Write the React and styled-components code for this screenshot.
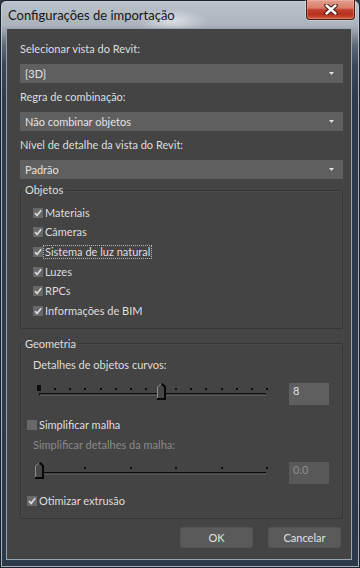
import styled, { createGlobalStyle } from 'styled-components';

const GlobalStyle = createGlobalStyle`
  html, body {
    margin: 0;
    padding: 0;
    background: #2c3948;
  }
  * {
    box-sizing: border-box;
  }
`;

const Window = styled.div`
  width: 360px;
  height: 568px;
  display: flex;
  flex-direction: column;
  padding: 0 7px 7px 5px;
  border: 1px solid #19212b;
  border-radius: 6px 6px 0 0;
  box-shadow: inset 0 0 0 1px rgba(196, 206, 216, 0.8);
  background:
    radial-gradient(ellipse 36px 12px at 172px 20px, rgba(255, 255, 255, 0.55), rgba(255, 255, 255, 0)),
    linear-gradient(180deg, #bac2ca 0, #abb4bd 24px, #98a2ac 30px, #5e6b7a 44px, #3a4756 64px, #2e3b4a 100px, #2c3948 100%);
  font-family: Lato, "Liberation Sans", sans-serif;
  font-size: 11px;
  color: #dedede;
`;

const TitleBar = styled.div`
  height: 27px;
  display: flex;
  justify-content: space-between;
  align-items: flex-start;
  margin-right: -3px;
`;

const Title = styled.div`
  padding: 6px 0 0 2px;
  font-size: 13px;
  line-height: 16px;
  color: #161616;
`;

const CloseButton = styled.div`
  width: 49px;
  height: 20px;
  margin-top: -1px;
  display: flex;
  align-items: center;
  justify-content: center;
  border: 1px solid #4a1a14;
  border-top: none;
  border-radius: 0 0 4px 4px;
  background: linear-gradient(180deg, #e2a091 0%, #d77c68 42%, #bf3f2b 52%, #b6311f 76%, #d45a3e 100%);
  box-shadow: 0 0 0 1px rgba(255, 255, 255, 0.35), inset 0 0 0 1px rgba(255, 196, 186, 0.35);
`;

const Panel = styled.div`
  flex: 1;
  display: flex;
  flex-direction: column;
  padding: 12px 8px 0 13px;
  background: #444444;
  border: 1px solid #9aa5b1;
`;

const Field = styled.div`
  & + & {
    margin-top: 6px;
  }
`;

const FieldLabel = styled.div`
  line-height: 16px;
  margin: ${(p) => p.$top || 0}px 0 ${(p) => p.$bottom || 0}px ${(p) => p.$indent || 0}px;
  color: ${(p) => (p.$disabled ? '#8a8a8a' : '#dedede')};
  white-space: nowrap;
`;

const Select = styled.div`
  height: 19px;
  padding: 0 9px 0 5px;
  display: flex;
  align-items: center;
  justify-content: space-between;
  background: #5f5f5f;
  color: #e2e2e2;
`;

const Group = styled.fieldset`
  margin: ${(p) => p.$top}px 0 0;
  padding: 5px 0 7px;
  min-width: 0;
  border: 1px solid #363636;
  border-radius: 2px;
  box-shadow: inset 1px 1px 0 #4a4a4a;
`;

const Legend = styled.legend`
  margin-left: 2px;
  padding: 0 2px;
  line-height: 16px;
  color: #dedede;
`;

const GroupBody = styled.div`
  display: flex;
  flex-direction: column;
  padding-left: ${(p) => p.$inset}px;
`;

const CheckList = styled.div`
  display: grid;
  grid-auto-rows: 19.6px;
  padding-left: 12px;
`;

const CheckRow = styled.div`
  height: ${(p) => p.$height || 20}px;
  margin-top: ${(p) => p.$top || 0}px;
  display: flex;
  align-items: center;
`;

const Box = styled.span`
  width: 10px;
  height: 10px;
  flex: none;
  display: flex;
  align-items: center;
  justify-content: center;
  background: #686868;
`;

const CheckLabel = styled.span`
  padding: 0 1px;
  line-height: 12px;
  border: 1px dotted ${(p) => (p.$focused ? '#b8b8b8' : 'transparent')};
  white-space: nowrap;
`;

const SliderRow = styled.div`
  height: 22px;
  margin-top: ${(p) => p.$top}px;
  padding-left: 9px;
  display: flex;
  align-items: flex-start;
`;

const SliderBody = styled.div`
  position: relative;
  width: 232px;
  height: 17px;
  flex: none;
`;

const Track = styled.div`
  position: absolute;
  left: 3px;
  right: 2px;
  top: 10px;
  height: 3px;
  border-top: 1px solid #0e0e0e;
  border-left: 1px solid #0e0e0e;
  border-bottom: 1px solid #565656;
`;

const Ticks = styled.div`
  position: absolute;
  left: 1px;
  right: 0;
  top: 5px;
  display: flex;
  align-items: flex-start;
  justify-content: space-between;
`;

const Tick = styled.span`
  width: 2px;
  height: 2px;
  background: #0c0c0c;

  &:first-child {
    width: 4px;
    height: 6px;
    margin-top: -3px;
  }
`;

const Thumb = styled.svg`
  position: absolute;
  top: 0;
  display: block;
`;

const NumberBox = styled.div`
  width: 40px;
  height: 22px;
  margin-left: 21px;
  padding: 0 4px;
  line-height: 16px;
  background: ${(p) => (p.$disabled ? '#595959' : '#5f5f5f')};
  color: ${(p) => (p.$disabled ? '#8e8e8e' : '#e2e2e2')};
`;

const Buttons = styled.div`
  display: flex;
  justify-content: flex-end;
  gap: 15px;
  margin-top: 8px;
  padding-right: 2px;
`;

const Button = styled.div`
  width: 73px;
  height: 21px;
  display: flex;
  align-items: center;
  justify-content: center;
  border: 1px solid #545454;
  border-radius: 3px;
  background: #5a5a5a;
  color: #e0e0e0;
`;

const Arrow = () => (
  <svg width="5" height="3" viewBox="0 0 5 3">
    <polygon points="0,0 5,0 2.5,3" fill="#e4e4e4" />
  </svg>
);

const Check = ({ checked, label, focused, height, top }) => (
  <CheckRow $height={height} $top={top}>
    <Box>
      {checked && (
        <svg width="8" height="8" viewBox="0 0 8 8">
          <path d="M1 4.2 L3.1 6.4 L7.2 1.3" fill="none" stroke="#d8d8d8" strokeWidth="1.7" />
        </svg>
      )}
    </Box>
    <CheckLabel $focused={focused}>{label}</CheckLabel>
  </CheckRow>
);

const Slider = ({ ticks, value, max }) => {
  const left = 3 + (value / max) * 228 - 4;
  return (
    <SliderBody>
      <Track />
      <Ticks>
        {Array.from({ length: ticks }, (_, i) => (
          <Tick key={i} />
        ))}
      </Ticks>
      <Thumb width="9" height="17" viewBox="0 0 9 17" style={{ left }}>
        <polygon points="0.5,4 4.5,0.5 8.5,4 8.5,16.5 0.5,16.5" fill="#474747" />
        <polyline points="0.5,16 0.5,4 4.5,0.5" fill="none" stroke="#8c8c8c" strokeWidth="1" />
        <polyline points="4.5,0.5 8,4 8,16 0,16" fill="none" stroke="#080808" strokeWidth="2" />
      </Thumb>
    </SliderBody>
  );
};

const objects = [
  { label: 'Materiais' },
  { label: 'Câmeras' },
  { label: 'Sistema de luz natural', focused: true },
  { label: 'Luzes' },
  { label: 'RPCs' },
  { label: 'Informações de BIM' },
];

const fields = [
  { label: 'Selecionar vista do Revit:', value: '{3D}' },
  { label: 'Regra de combinação:', value: 'Não combinar objetos' },
  { label: 'Nível de detalhe da vista do Revit:', value: 'Padrão' },
];

export default function App() {
  return (
    <>
      <GlobalStyle />
      <Window>
        <TitleBar>
          <Title>Configurações de importação</Title>
          <CloseButton>
            <svg width="14" height="11" viewBox="0 0 14 11">
              <path d="M2.5 1.5 L11.5 9.5 M11.5 1.5 L2.5 9.5" stroke="#3b1712" strokeWidth="4.4" strokeLinecap="round" />
              <path d="M2.5 1.5 L11.5 9.5 M11.5 1.5 L2.5 9.5" stroke="#ffffff" strokeWidth="2.4" strokeLinecap="round" />
            </svg>
          </CloseButton>
        </TitleBar>
        <Panel>
          {fields.map((f) => (
            <Field key={f.label}>
              <FieldLabel $bottom={7}>{f.label}</FieldLabel>
              <Select>
                <span>{f.value}</span>
                <Arrow />
              </Select>
            </Field>
          ))}

          <Group $top={3}>
            <Legend>Objetos</Legend>
            <CheckList>
              {objects.map((o) => (
                <Check key={o.label} checked label={o.label} focused={o.focused} height={19.6} />
              ))}
            </CheckList>
          </Group>

          <Group $top={7}>
            <Legend>Geometria</Legend>
            <GroupBody $inset={6}>
              <FieldLabel $indent={6}>Detalhes de objetos curvos:</FieldLabel>
              <SliderRow $top={10}>
                <Slider ticks={16} value={8} max={15} />
                <NumberBox>8</NumberBox>
              </SliderRow>
              <Check label="Simplificar malha" top={10} />
              <FieldLabel $indent={6} $top={2} $disabled>
                Simplificar detalhes da malha:
              </FieldLabel>
              <SliderRow $top={9}>
                <Slider ticks={6} value={0} max={5} />
                <NumberBox $disabled>0.0</NumberBox>
              </SliderRow>
              <Check checked label="Otimizar extrusão" top={7} />
            </GroupBody>
          </Group>

          <Buttons>
            <Button>OK</Button>
            <Button>Cancelar</Button>
          </Buttons>
        </Panel>
      </Window>
    </>
  );
}
